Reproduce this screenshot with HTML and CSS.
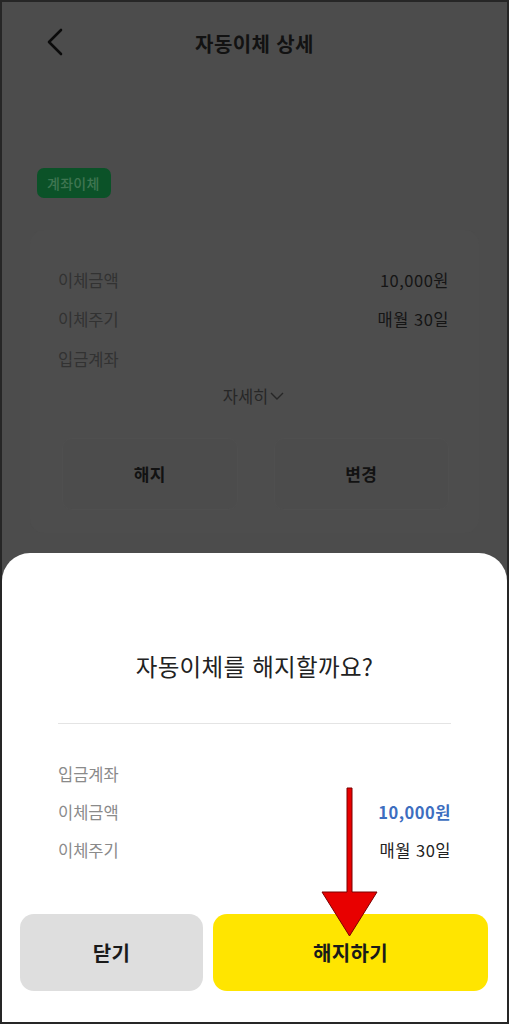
FILE: index.html
```html
<!DOCTYPE html>
<html lang="ko">
<head>
  <meta charset="UTF-8" />
  <meta name="viewport" content="width=device-width, initial-scale=1.0" />
  <title>자동이체 상세</title>
  <link rel="stylesheet" href="styles.css">
</head>
<body>
  <div class="screen">
    <!-- dimmed page behind the sheet -->
    <header class="topbar">
      <button class="back" aria-label="뒤로">
        <svg width="20" height="30" viewBox="0 0 20 30"><polyline points="15,2 3,14 15,26" fill="none" stroke="#0b0b0b" stroke-width="2.6" stroke-linecap="round" stroke-linejoin="round"/></svg>
      </button>
      <h1>자동이체 상세</h1>
      <span></span>
    </header>

    <main class="detail">
      <span class="tag">계좌이체</span>

      <section class="card">
        <div class="row"><span class="label">이체금액</span><span class="value">10,000원</span></div>
        <div class="row"><span class="label">이체주기</span><span class="value">매월 30일</span></div>
        <div class="row"><span class="label">입금계좌</span><span class="value"></span></div>
        <div class="more">자세히
          <svg width="14" height="10" viewBox="0 0 14 10"><polyline points="1,2 7,8 13,2" fill="none" stroke="#272727" stroke-width="1.4"/></svg>
        </div>
        <div class="actions">
          <button class="ghost">해지</button>
          <button class="ghost">변경</button>
        </div>
      </section>
    </main>

    <!-- bottom sheet -->
    <div class="sheet">
      <h2>자동이체를 해지할까요?</h2>
      <div class="summary">
        <div class="row"><span class="label">입금계좌</span><span class="value"></span></div>
        <div class="row"><span class="label">이체금액</span><span class="value amount">10,000원</span></div>
        <div class="row"><span class="label">이체주기</span><span class="value">매월 30일</span></div>
      </div>
      <div class="sheet-buttons">
        <button class="btn close">닫기</button>
        <button class="btn confirm">해지하기</button>
      </div>
    </div>

    <svg class="pointer" width="64" height="156" viewBox="0 0 64 156">
      <polygon points="29,3 34,3 34,107 59,107 31.5,151 4,107 29,107" fill="#e80000" stroke="#7a0000" stroke-width="1"/>
    </svg>
  </div>
</body>
</html>
```

FILE: styles.css
```css
* {
  box-sizing: border-box;
}
body {
  margin: 0;
  font-family: "Noto Sans CJK KR", "Noto Sans", sans-serif;
  background: #222;
}
button {
  font-family: inherit;
  border: none;
  background: none;
  padding: 0;
  cursor: pointer;
}
.screen {
  position: relative;
  width: 509px;
  height: 1024px;
  overflow: hidden;
  border: 2px solid #262626;
  background: #4c4c4c;
}

/* header */
.topbar {
  height: 82px;
  display: grid;
  grid-template-columns: 1fr auto 1fr;
  align-items: center;
  padding: 0 44px;
}
.back {
  width: 20px;
  height: 30px;
  display: flex;
}
.topbar h1 {
  margin: 0;
  font-size: 20px;
  font-weight: 700;
  color: #121212;
  letter-spacing: 0.4px;
}

/* detail (dimmed) */
.detail {
  padding: 0 28px;
}
.tag {
  display: inline-block;
  margin: 84px 0 0 7px;
  height: 30px;
  line-height: 30px;
  padding: 0 11px 0 10px;
  border-radius: 7px;
  background: #0b5228;
  color: #3f7652;
  font-size: 14px;
  font-weight: 500;
  letter-spacing: 0.3px;
}
.card {
  margin-top: 32px;
  padding: 30px 30px 23px 28px;
  border-radius: 14px;
  background: #4d4d4d;
}
.row {
  display: flex;
  justify-content: space-between;
  align-items: center;
  height: 39.5px;
  font-size: 16.5px;
}
.value {
  letter-spacing: 0.5px;
}
.card .label {
  color: #323232;
}
.card .value {
  color: #151515;
}
.more {
  height: 34px;
  display: flex;
  justify-content: center;
  align-items: center;
  gap: 2px;
  font-size: 16.5px;
  color: #272727;
}
.actions {
  margin-top: 25px;
  display: grid;
  grid-template-columns: 1fr 1fr;
  gap: 36px;
  padding-left: 4px;
}
.ghost {
  height: 72px;
  border-radius: 10px;
  background: #4c4c4c;
  border: 1px solid #4f4f4f;
  font-size: 17px;
  font-weight: 700;
  color: #121212;
  letter-spacing: 0.4px;
}

/* sheet */
.sheet {
  position: absolute;
  left: 0;
  right: 0;
  bottom: 0;
  height: 469px;
  background: #fff;
  border-radius: 28px 28px 0 0;
  display: flex;
  flex-direction: column;
}
.sheet h2 {
  margin: 97px 56px 0;
  padding-bottom: 41px;
  border-bottom: 1px solid #e4e4e4;
  text-align: center;
  font-size: 23.5px;
  font-weight: 400;
  line-height: 32px;
  color: #222;
  letter-spacing: 0.3px;
}
.summary {
  margin: 31px 56px 0;
}
.summary .row {
  height: 38px;
}
.summary .label {
  color: #8a8a8a;
}
.summary .value {
  color: #222;
}
.summary .amount {
  color: #3d6ec0;
  font-weight: 700;
}
.sheet-buttons {
  margin-top: auto;
  margin-bottom: 31px;
  padding: 0 19px 0 18px;
  display: grid;
  grid-template-columns: 183px 1fr;
  gap: 10px;
}
.btn {
  height: 77px;
  border-radius: 14px;
  font-size: 20px;
  font-weight: 700;
  color: #1a1a1a;
  letter-spacing: 0.4px;
}
.close {
  background: #dedede;
}
.confirm {
  background: #ffe500;
}

/* red pointer over the confirm button */
.pointer {
  position: absolute;
  left: 316px;
  top: 783px;
}
```
